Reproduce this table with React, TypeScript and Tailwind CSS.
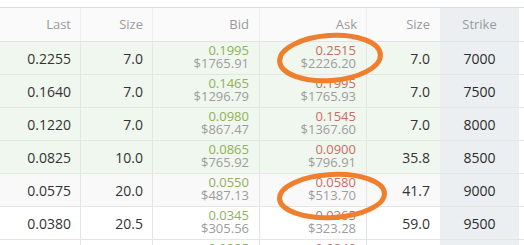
import React from 'react';

type Row = {
  last: string;
  size: string;
  bid: string;
  bidUsd: string;
  ask: string;
  askUsd: string;
  askSize: string;
  strike: string;
  bg: string;
};

const rows: Row[] = [
  { last: '0.2255', size: '7.0', bid: '0.1995', bidUsd: '$1765.91', ask: '0.2515', askUsd: '$2226.20', askSize: '7.0', strike: '7000', bg: 'bg-[#f0f7ee]' },
  { last: '0.1640', size: '7.0', bid: '0.1465', bidUsd: '$1296.79', ask: '0.1995', askUsd: '$1765.93', askSize: '7.0', strike: '7500', bg: 'bg-[#f0f7ee]' },
  { last: '0.1220', size: '7.0', bid: '0.0980', bidUsd: '$867.47', ask: '0.1545', askUsd: '$1367.60', askSize: '7.0', strike: '8000', bg: 'bg-[#f0f7ee]' },
  { last: '0.0825', size: '10.0', bid: '0.0865', bidUsd: '$765.92', ask: '0.0900', askUsd: '$796.91', askSize: '35.8', strike: '8500', bg: 'bg-[#f0f7ee]' },
  { last: '0.0575', size: '20.0', bid: '0.0550', bidUsd: '$487.13', ask: '0.0580', askUsd: '$513.70', askSize: '41.7', strike: '9000', bg: 'bg-[#f9f9f9]' },
  { last: '0.0380', size: '20.5', bid: '0.0345', bidUsd: '$305.56', ask: '0.0365', askUsd: '$323.28', askSize: '59.0', strike: '9500', bg: 'bg-white' },
  { last: '0.0255', size: '15.0', bid: '0.0225', bidUsd: '$199.16', ask: '0.0240', askUsd: '$212.44', askSize: '62.3', strike: '10000', bg: 'bg-white' },
];

const cols = 'grid grid-cols-[81px_72px_107px_107px_73px_79px_5px]';

const Header = () => (
  <div className={`${cols} h-[34px] border-b border-[#e2e2e2] text-[13px] text-[#9a9a9a]`}>
    <div className="flex items-center justify-end pr-[9px] bg-[#fafafa] border-r border-[#efefef]">Last</div>
    <div className="flex items-center justify-end pr-[9px] bg-[#fafafa] border-r border-[#efefef]">Size</div>
    <div className="flex items-center justify-end pr-[10px] bg-[#fafafa] border-r border-[#efefef]">Bid</div>
    <div className="flex items-center justify-end pr-[9px] bg-[#fafafa] border-r border-[#efefef]">Ask</div>
    <div className="flex items-center justify-end pr-[10px] bg-[#fafafa]">Size</div>
    <div className="flex items-center justify-center bg-[#eceff1]">Strike</div>
    <div className="bg-white" />
  </div>
);

const PriceCell = ({ value, usd, color }: { value: string; usd: string; color: string }) => (
  <div className="flex flex-col items-end justify-center pr-[10px] pb-[2px] border-r border-[#e1e8df] text-[13px] leading-[13.5px]">
    <span className={color}>{value}</span>
    <span className="text-[#9d9d9d]">{usd}</span>
  </div>
);

const TableRow = ({ r }: { r: Row }) => (
  <div className={`${cols} h-[33px] border-b border-[#e3e6e2] ${r.bg} text-[14px] text-[#333]`}>
    <div className="flex items-center justify-end pr-[9px] border-r border-[#e1e8df]">{r.last}</div>
    <div className="flex items-center justify-end pr-[9px] border-r border-[#e1e8df]">{r.size}</div>
    <PriceCell value={r.bid} usd={r.bidUsd} color="text-[#8fb256]" />
    <PriceCell value={r.ask} usd={r.askUsd} color="text-[#cd6b63]" />
    <div className="flex items-center justify-end pr-[10px]">{r.askSize}</div>
    <div className="flex items-center justify-center bg-[#eceff1] text-[#2b2b2b]">{r.strike}</div>
    <div className="bg-white" />
  </div>
);

export default function App() {
  return (
    <div className="relative w-[524px] h-[245px] overflow-hidden bg-white font-['Open_Sans',sans-serif]">
      <div className="h-[8px] border-b border-[#dcdcdc]" />
      <Header />
      {rows.map((r) => (
        <TableRow key={r.strike} r={r} />
      ))}
      <svg className="absolute inset-0 pointer-events-none" width="524" height="245" viewBox="0 0 524 245">
        <ellipse cx="330" cy="58" rx="50.5" ry="22.5" fill="none" stroke="#f07f2d" strokeWidth="5" transform="rotate(-4 330 58)" />
        <ellipse cx="332" cy="196" rx="52.5" ry="21.5" fill="none" stroke="#f07f2d" strokeWidth="5" transform="rotate(-3 332 196)" />
      </svg>
    </div>
  );
}
